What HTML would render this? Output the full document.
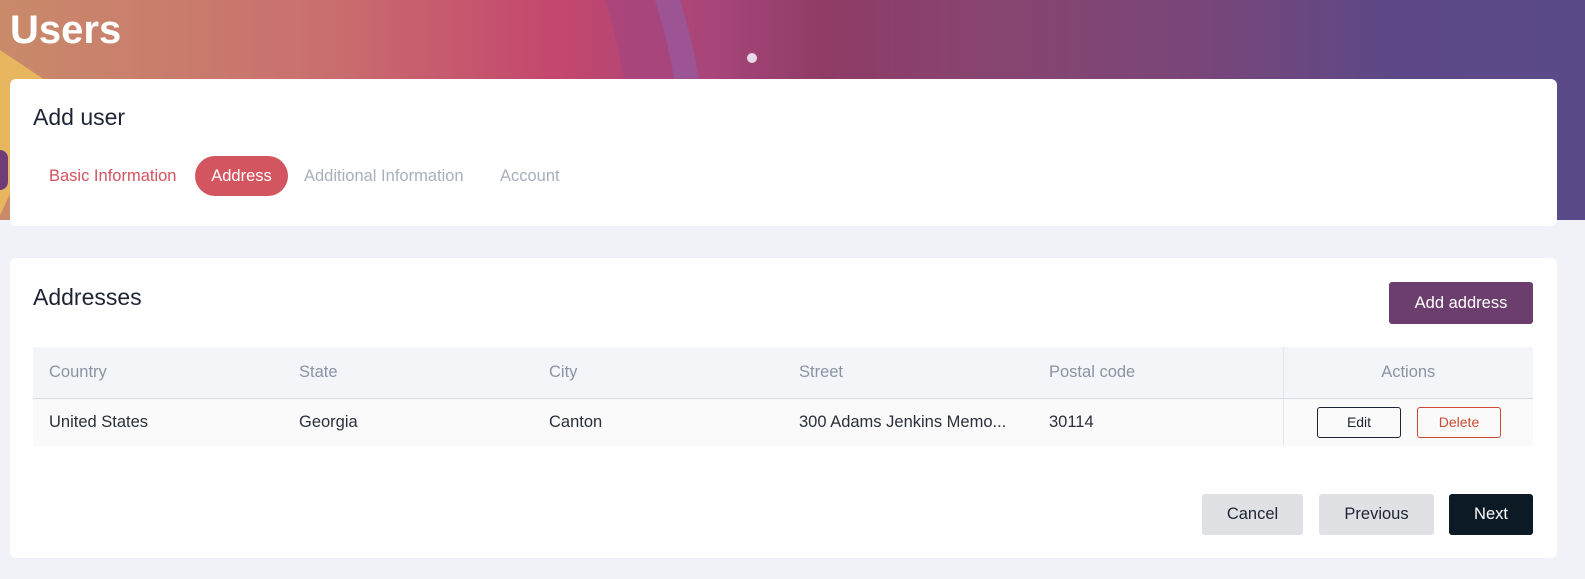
<!DOCTYPE html>
<html><head><meta charset="utf-8"><style>
*{box-sizing:border-box;margin:0;padding:0}
body{width:1585px;height:579px;overflow:hidden;background:#f1f2f7;font-family:"Liberation Sans",sans-serif;position:relative}
.banner{position:absolute;left:0;top:0;width:1585px;height:220px;background:linear-gradient(90deg,#c98a6a 0%,#c9706e 20%,#c4476e 35%,#a8457a 45%,#8e3c66 52%,#884470 62%,#7a4678 75%,#5c4887 88%,#5a4a88 100%);overflow:hidden}
.card{position:absolute;left:10px;width:1547px;background:#fff;border-radius:6px}
h1{position:absolute;left:10px;top:8px;font-size:40px;color:#fff;font-weight:bold}
h2{font-weight:normal;font-size:23px;color:#1e2433}
.tab{position:absolute;top:77px;font-size:16.5px;height:40px;line-height:40px}
th,td{text-align:left;font-weight:normal;font-size:16.5px;padding-left:16px}
.btn{position:absolute;border-radius:3px;font-size:16.5px;text-align:center}
</style></head><body>
<div class="banner">
<svg width="1585" height="220" style="position:absolute;left:0;top:0">
<path d="M605 0 Q640 110 625 220 L700 220 Q715 110 680 0 Z" fill="rgba(160,70,130,.55)"/>
<path d="M655 0 Q690 110 678 220 L700 220 Q715 110 680 0 Z" fill="rgba(150,95,165,.6)"/>
<circle cx="752" cy="58" r="5" fill="#e8dbe6"/>
<path d="M0 50 L60 90 L0 215 Z" fill="#e9b660"/>
<rect x="-10" y="150" width="18" height="40" rx="8" fill="#6f3c78"/>
</svg>
</div>
<h1>Users</h1>
<div class="card" style="top:79px;height:147px">
<h2 style="position:absolute;left:23px;top:25px">Add user</h2>
<div class="tab" style="left:39px;color:#d2525e">Basic Information</div>
<div class="tab" style="left:185px;width:93px;background:#d2555f;color:#fff;border-radius:20px;text-align:center">Address</div>
<div class="tab" style="left:294px;color:#a9afba">Additional Information</div>
<div class="tab" style="left:490px;color:#a9afba">Account</div>
</div>
<div class="card" style="top:258px;height:300px">
<h2 style="position:absolute;left:23px;top:26px">Addresses</h2>
<div class="btn" style="left:1379px;top:24px;width:144px;height:42px;line-height:42px;background:#6c3e6e;color:#fff">Add address</div>
<table style="position:absolute;left:23px;top:89px;width:1500px;border-collapse:collapse">
<tr style="background:#f4f5f9;height:51px;color:#8a93a3;border-bottom:1px solid #d8dbe3">
<th style="width:250px">Country</th><th style="width:250px">State</th><th style="width:250px">City</th><th style="width:250px">Street</th><th style="width:250px">Postal code</th><th style="text-align:center;padding:0;border-left:1px solid #e2e4ea">Actions</th></tr>
<tr style="background:#fafafa;height:48px;color:#2a2f3a">
<td>United States</td><td>Georgia</td><td>Canton</td><td>300 Adams Jenkins Memo...</td><td>30114</td><td style="border-left:1px solid #e2e4ea;padding:0"></td></tr>
</table>
<div class="btn" style="left:1307px;top:149px;width:84px;height:31px;line-height:29px;border:1px solid #1e2433;color:#1e2433;font-size:14px">Edit</div>
<div class="btn" style="left:1407px;top:149px;width:84px;height:31px;line-height:29px;border:1px solid #cc4a32;color:#cc4a32;font-size:14px">Delete</div>
<div class="btn" style="left:1192px;top:236px;width:101px;height:41px;line-height:41px;background:#dfe1e5;color:#1e2433">Cancel</div>
<div class="btn" style="left:1309px;top:236px;width:115px;height:41px;line-height:41px;background:#dfe1e5;color:#1e2433">Previous</div>
<div class="btn" style="left:1439px;top:236px;width:84px;height:41px;line-height:41px;background:#0b1a24;color:#fff">Next</div>
</div>
</body></html>
